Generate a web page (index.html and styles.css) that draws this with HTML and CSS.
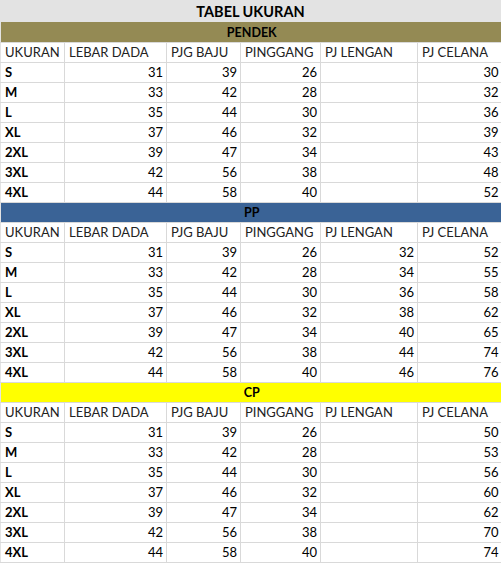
FILE: index.html
```html
<!DOCTYPE html>
<html>
<head>
<meta charset="utf-8">
<link rel="stylesheet" href="styles.css">
</head>
<body>
<div class="title">TABEL UKURAN</div>
<table class="sheet">
<colgroup>
<col class="c1"><col class="c2"><col class="c3"><col class="c4"><col class="c5"><col class="c6">
</colgroup>
<tbody>
<tr class="band band-olive first"><td colspan="6">PENDEK</td></tr>
<tr class="head"><td>UKURAN</td><td>LEBAR DADA</td><td>PJG BAJU</td><td>PINGGANG</td><td>PJ LENGAN</td><td>PJ CELANA</td></tr>
<tr><td class="size">S</td><td class="num">31</td><td class="num">39</td><td class="num">26</td><td class="num"></td><td class="num">30</td></tr>
<tr><td class="size">M</td><td class="num">33</td><td class="num">42</td><td class="num">28</td><td class="num"></td><td class="num">32</td></tr>
<tr><td class="size">L</td><td class="num">35</td><td class="num">44</td><td class="num">30</td><td class="num"></td><td class="num">36</td></tr>
<tr><td class="size">XL</td><td class="num">37</td><td class="num">46</td><td class="num">32</td><td class="num"></td><td class="num">39</td></tr>
<tr><td class="size">2XL</td><td class="num">39</td><td class="num">47</td><td class="num">34</td><td class="num"></td><td class="num">43</td></tr>
<tr><td class="size">3XL</td><td class="num">42</td><td class="num">56</td><td class="num">38</td><td class="num"></td><td class="num">48</td></tr>
<tr><td class="size">4XL</td><td class="num">44</td><td class="num">58</td><td class="num">40</td><td class="num"></td><td class="num">52</td></tr>

<tr class="band band-blue"><td colspan="6">PP</td></tr>
<tr class="head"><td>UKURAN</td><td>LEBAR DADA</td><td>PJG BAJU</td><td>PINGGANG</td><td>PJ LENGAN</td><td>PJ CELANA</td></tr>
<tr><td class="size">S</td><td class="num">31</td><td class="num">39</td><td class="num">26</td><td class="num">32</td><td class="num">52</td></tr>
<tr><td class="size">M</td><td class="num">33</td><td class="num">42</td><td class="num">28</td><td class="num">34</td><td class="num">55</td></tr>
<tr><td class="size">L</td><td class="num">35</td><td class="num">44</td><td class="num">30</td><td class="num">36</td><td class="num">58</td></tr>
<tr><td class="size">XL</td><td class="num">37</td><td class="num">46</td><td class="num">32</td><td class="num">38</td><td class="num">62</td></tr>
<tr><td class="size">2XL</td><td class="num">39</td><td class="num">47</td><td class="num">34</td><td class="num">40</td><td class="num">65</td></tr>
<tr><td class="size">3XL</td><td class="num">42</td><td class="num">56</td><td class="num">38</td><td class="num">44</td><td class="num">74</td></tr>
<tr><td class="size">4XL</td><td class="num">44</td><td class="num">58</td><td class="num">40</td><td class="num">46</td><td class="num">76</td></tr>

<tr class="band band-yellow"><td colspan="6">CP</td></tr>
<tr class="head"><td>UKURAN</td><td>LEBAR DADA</td><td>PJG BAJU</td><td>PINGGANG</td><td>PJ LENGAN</td><td>PJ CELANA</td></tr>
<tr><td class="size">S</td><td class="num">31</td><td class="num">39</td><td class="num">26</td><td class="num"></td><td class="num">50</td></tr>
<tr><td class="size">M</td><td class="num">33</td><td class="num">42</td><td class="num">28</td><td class="num"></td><td class="num">53</td></tr>
<tr><td class="size">L</td><td class="num">35</td><td class="num">44</td><td class="num">30</td><td class="num"></td><td class="num">56</td></tr>
<tr><td class="size">XL</td><td class="num">37</td><td class="num">46</td><td class="num">32</td><td class="num"></td><td class="num">60</td></tr>
<tr><td class="size">2XL</td><td class="num">39</td><td class="num">47</td><td class="num">34</td><td class="num"></td><td class="num">62</td></tr>
<tr><td class="size">3XL</td><td class="num">42</td><td class="num">56</td><td class="num">38</td><td class="num"></td><td class="num">70</td></tr>
<tr><td class="size">4XL</td><td class="num">44</td><td class="num">58</td><td class="num">40</td><td class="num"></td><td class="num">74</td></tr>
</tbody>
</table>
</body>
</html>
```

FILE: styles.css
```css
html, body {
  margin: 0;
  padding: 0;
  background: #ffffff;
}
body {
  font-family: Lato, "Open Sans", sans-serif;
  color: #000;
  width: 501px;
  overflow: hidden;
}
.title {
  height: 22px;
  line-height: 24px;
  background: #e3e3e3;
  text-align: center;
  font-weight: bold;
  font-size: 14.5px;
}
.sheet {
  border-collapse: collapse;
  table-layout: fixed;
  width: 501px;
  font-size: 13px;
}
.c1 { width: 64px; }
.c2 { width: 102px; }
.c3 { width: 74px; }
.c4 { width: 80px; }
.c5 { width: 97px; }
.c6 { width: 84px; }
.sheet td {
  height: 19px;
  padding: 0 3px 0 4px;
  line-height: 19px;
  border: 1px solid #d9d9d9;
  white-space: nowrap;
  overflow: hidden;
  vertical-align: middle;
}
.sheet tr td:first-child { border-left-color: #e3e3e3; }
.sheet tr td:last-child { border-right: none; }
.sheet .num { text-align: right; }
.sheet .size { font-weight: bold; }
.head td { color: #222; }
.band td {
  text-align: center;
  font-weight: bold;
  font-size: 12.5px;
  border-color: #d9d9d9;
}
.band.first td { height: 20px; border-top: none; }
.band-olive td { background: #948a54; }
.band-blue td { background: #3a6396; }
.band-yellow td { background: #ffff00; }
```
